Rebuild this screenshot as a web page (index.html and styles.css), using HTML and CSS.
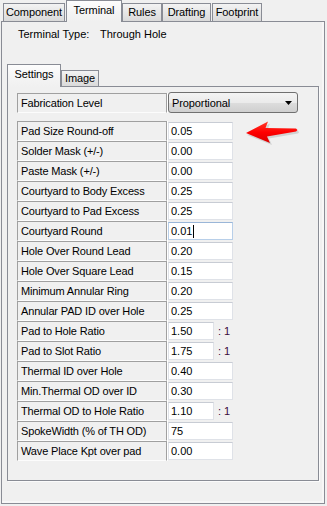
FILE: index.html
```html
<!DOCTYPE html>
<html>
<head>
<meta charset="utf-8">
<link rel="stylesheet" href="styles.css">
</head>
<body>
<div class="dlg">
  <div class="tabs">
    <div class="tab t-comp">Component</div>
    <div class="tab active t-term">Terminal</div>
    <div class="tab t-rules">Rules</div>
    <div class="tab t-draft">Drafting</div>
    <div class="tab t-foot">Footprint</div>
  </div>
  <div class="page">
    <div class="ttype"><span class="k">Terminal Type:</span><span class="v">Through Hole</span></div>
    <div class="subtabs">
      <div class="stab active s-set">Settings</div>
      <div class="stab s-img">Image</div>
    </div>
    <div class="subpage">
      <div class="row fab">
        <div class="lbl">Fabrication Level</div>
        <div class="select"><span>Proportional</span><svg class="caret-dd" width="7" height="4" viewBox="0 0 7 4"><path d="M0 0H7L3.5 4Z" fill="#000"/></svg></div>
      </div>
      <div class="list">
        <div class="row"><div class="lbl">Pad Size Round-off</div><div class="inp">0.05</div></div>
        <div class="row"><div class="lbl">Solder Mask (+/-)</div><div class="inp">0.00</div></div>
        <div class="row"><div class="lbl">Paste Mask (+/-)</div><div class="inp">0.00</div></div>
        <div class="row"><div class="lbl">Courtyard to Body Excess</div><div class="inp">0.25</div></div>
        <div class="row"><div class="lbl">Courtyard to Pad Excess</div><div class="inp">0.25</div></div>
        <div class="row"><div class="lbl">Courtyard Round</div><div class="inp focus">0.01<span class="cursor"></span></div></div>
        <div class="row"><div class="lbl">Hole Over Round Lead</div><div class="inp">0.20</div></div>
        <div class="row"><div class="lbl">Hole Over Square Lead</div><div class="inp">0.15</div></div>
        <div class="row"><div class="lbl">Minimum Annular Ring</div><div class="inp">0.20</div></div>
        <div class="row"><div class="lbl">Annular PAD ID over Hole</div><div class="inp">0.25</div></div>
        <div class="row"><div class="lbl">Pad to Hole Ratio</div><div class="inp narrow">1.50</div><span class="suf">: 1</span></div>
        <div class="row"><div class="lbl">Pad to Slot Ratio</div><div class="inp narrow">1.75</div><span class="suf">: 1</span></div>
        <div class="row"><div class="lbl">Thermal ID over Hole</div><div class="inp">0.40</div></div>
        <div class="row"><div class="lbl">Min.Thermal OD over ID</div><div class="inp">0.30</div></div>
        <div class="row"><div class="lbl">Thermal OD to Hole Ratio</div><div class="inp narrow">1.10</div><span class="suf">: 1</span></div>
        <div class="row"><div class="lbl">SpokeWidth (% of TH OD)</div><div class="inp">75</div></div>
        <div class="row"><div class="lbl">Wave Place Kpt over pad</div><div class="inp">0.00</div></div>
      </div>
      <svg class="arrow" width="56" height="26" viewBox="0 0 56 26">
        <defs>
          <linearGradient id="ag" x1="0" y1="0" x2="0" y2="1">
            <stop offset="0" stop-color="#ff3a2a"/>
            <stop offset="0.5" stop-color="#ff0000"/>
            <stop offset="1" stop-color="#d80000"/>
          </linearGradient>
        </defs>
        <path d="M3 15 L26 3.5 L23.5 10 L54 10.5 L55 12.5 L54 13.5 L25 18.5 L28 25 Z" fill="#000" opacity="0.12"/>
        <path d="M2 13 L24 1.5 L21.5 8 L52 8.5 L53.5 10 L52 11.5 L23 16.5 L26 23 Z" fill="url(#ag)"/>
      </svg>
    </div>
  </div>
</div>
</body>
</html>
```

FILE: styles.css
```css
html, body {
  margin: 0;
  padding: 0;
  background: #f0f0f0;
}
body {
  font-family: "Liberation Sans", Arial, sans-serif;
  font-size: 11px;
  color: #000;
  width: 327px;
  height: 506px;
  overflow: hidden;
}
.dlg {
  padding-left: 1px;
  width: 324px;
}
.tabs {
  display: flex;
  align-items: flex-end;
  height: 21px;
  padding-left: 2px;
}
.tab {
  box-sizing: border-box;
  height: 18px;
  border: 1px solid #898c95;
  border-bottom: none;
  background: linear-gradient(#f3f3f3, #e6e6e6 50%, #dadada);
  text-align: center;
  line-height: 17px;
  font-size: 11px;
  letter-spacing: -0.1px;
  white-space: nowrap;
}
.tab.active {
  height: 22px;
  margin-bottom: -1px;
  position: relative;
  z-index: 1;
  background: linear-gradient(#fdfdfd, #f4f4f4 60%, #f0f0f0);
  line-height: 19px;
}
.t-comp { width: 62px; }
.t-term { width: 56px; margin-left: 1px; }
.t-rules { width: 40px; }
.t-draft { width: 49px; }
.t-foot { width: 50px; margin-left: 1px; }

.page {
  box-sizing: border-box;
  height: 483px;
  border: 1px solid #898c95;
  box-shadow: inset -2px -2px 0 #f7f7f7;
  padding: 0 5px;
}
.ttype {
  margin-top: 6px;
  line-height: 13px;
  padding-left: 11px;
  white-space: nowrap;
}
.ttype .k {
  display: inline-block;
  width: 82px;
}
.subtabs {
  margin-top: 23px;
  display: flex;
  align-items: flex-end;
  height: 22px;
}
.stab {
  box-sizing: border-box;
  height: 16px;
  border: 1px solid #898c95;
  border-bottom: none;
  background: linear-gradient(#f3f3f3, #e6e6e6 50%, #dadada);
  text-align: center;
  line-height: 15px;
  letter-spacing: -0.1px;
}
.stab.active {
  height: 23px;
  margin-bottom: -1px;
  position: relative;
  z-index: 1;
  background: linear-gradient(#fdfdfd, #f4f4f4 60%, #f0f0f0);
  line-height: 19px;
}
.s-set { width: 54px; }
.s-img { width: 38px; margin-left: 0; }

.subpage {
  position: relative;
  box-sizing: border-box;
  width: 312px;
  height: 395px;
  border: 1px solid #898c95;
  box-shadow: 1px 1px 0 #fbfbfb;
  padding: 5px 0 0 9px;
}
.row {
  display: flex;
  align-items: center;
  height: 20px;
}
.row.fab {
  height: 21px;
}
.lbl {
  box-sizing: border-box;
  width: 150px;
  height: 20px;
  border: 1px solid #a0a0a0;
  border-bottom-color: #fcfcfc;
  box-shadow: 1px 0 0 #fff;
  padding-left: 3px;
  line-height: 18px;
  white-space: nowrap;
  letter-spacing: -0.15px;
}
.select {
  box-sizing: border-box;
  margin-left: 1px;
  width: 130px;
  height: 21px;
  border: 1px solid #707070;
  border-radius: 3px;
  background: linear-gradient(#f4f4f4, #ebebeb 50%, #dddddd 51%, #cfcfcf);
  display: flex;
  align-items: center;
  justify-content: space-between;
  padding: 0 5px 0 3px;
  letter-spacing: -0.1px;
}
.caret-dd {
  display: block;
}
.list {
  margin-top: 8px;
}
.inp {
  box-sizing: border-box;
  margin-left: 1px;
  width: 65px;
  height: 18px;
  background: #fff;
  border: 1px solid #dfe2e8;
  border-top-color: #c8ccd4;
  padding-left: 2px;
  line-height: 16px;
  display: flex;
  align-items: center;
}
.inp.narrow {
  width: 46px;
}
.inp.focus {
  border-color: #b8cfe9;
  border-top-color: #9ab6d8;
}
.cursor {
  display: inline-block;
  width: 1px;
  height: 13px;
  background: #000;
  margin-left: 1px;
}
.suf {
  margin-left: 4px;
  color: #3a0a3a;
}
.arrow {
  position: absolute;
  left: 236px;
  top: 33px;
}
```
